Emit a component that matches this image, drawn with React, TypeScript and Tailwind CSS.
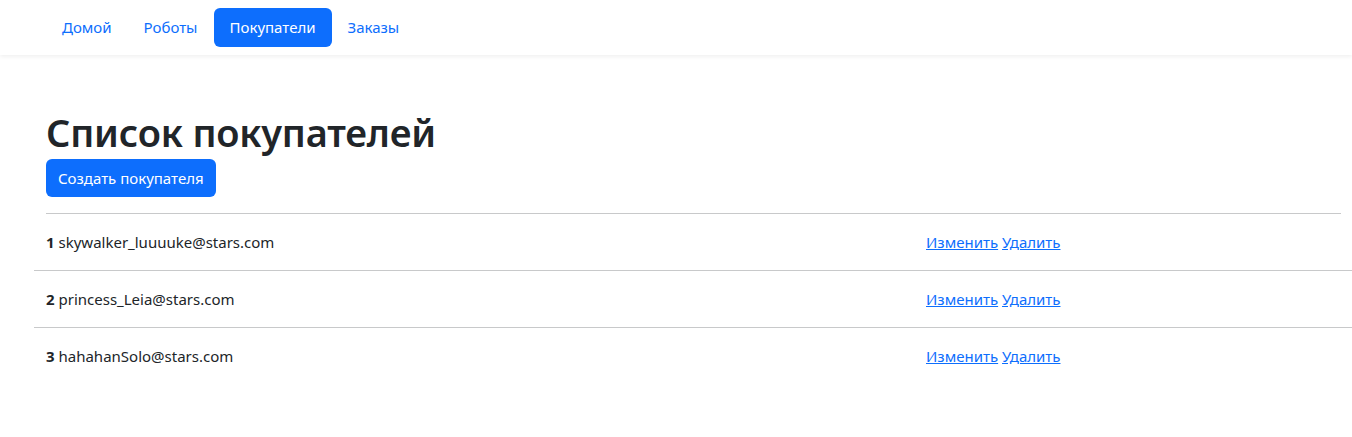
import React from 'react';

const customers = [
  { id: 1, email: 'skywalker_luuuuke@stars.com' },
  { id: 2, email: 'princess_Leia@stars.com' },
  { id: 3, email: 'hahahanSolo@stars.com' },
];

const navItems = ['Домой', 'Роботы', 'Покупатели', 'Заказы'];

const App = () => {
  return (
    <div className="min-h-[437px] bg-white text-[#212529] font-['Noto_Sans','Open_Sans',sans-serif] text-[15px]">
      <nav className="h-[55px] bg-white shadow-[0_2px_4px_rgba(0,0,0,0.06)] flex items-center pl-[46px]">
        {navItems.map((item) => (
          <a
            key={item}
            href="#"
            className={
              item === 'Покупатели'
                ? 'px-4 h-[39px] flex items-center rounded-[6px] bg-[#0d6efd] text-white'
                : 'px-4 h-[39px] flex items-center text-[#0d6efd]'
            }
          >
            {item}
          </a>
        ))}
      </nav>

      <main className="pt-[53px]">
        <div className="pl-[46px] pr-[11px]">
          <h1 className="text-[38px] leading-[48px] font-semibold tracking-[-0.005em]">Список покупателей</h1>
          <button className="mt-[3px] h-[38px] px-3 rounded-[6px] bg-[#0d6efd] text-white">
            Создать покупателя
          </button>
          <hr className="mt-4 border-0 border-t border-[#c8c9ca]" />
        </div>

        <div className="ml-[34px]">
          {customers.map((c, i) => (
            <div
              key={c.id}
              className={
                i < customers.length - 1
                  ? 'grid grid-cols-[880px_1fr] h-[57px] items-center border-b border-[#c8c9ca]'
                  : 'grid grid-cols-[880px_1fr] h-[57px] items-center'
              }
            >
              <div className="pl-3">
                <span className="font-bold">{c.id}</span> {c.email}
              </div>
              <div className="pl-3">
                <a href="#" className="text-[#0d6efd] underline">Изменить</a>{' '}
                <a href="#" className="text-[#0d6efd] underline">Удалить</a>
              </div>
            </div>
          ))}
        </div>
      </main>
    </div>
  );
};

export default App;
